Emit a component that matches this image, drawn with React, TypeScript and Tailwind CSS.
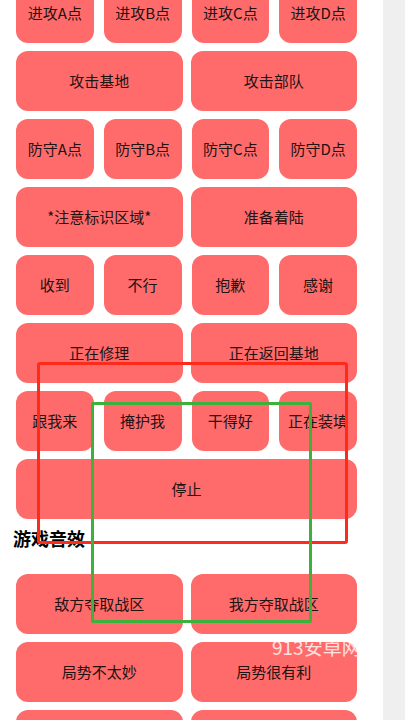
import React from "react";

const font = { fontFamily: '"Noto Sans CJK SC", "Noto Sans", sans-serif' };

function Btn({ label }: { label: string }) {
  return (
    <div className="flex-1 h-[60px] rounded-[12px] bg-[#ff6b6b] flex items-center justify-center text-[15px] text-[#221212]">
      {label}
    </div>
  );
}

function Row4({ items }: { items: string[] }) {
  return (
    <div className="flex gap-[10px]">
      {items.map((t, i) => (
        <Btn key={i} label={t} />
      ))}
    </div>
  );
}

function Row2({ items }: { items: string[] }) {
  return (
    <div className="flex gap-[8px]">
      {items.map((t, i) => (
        <Btn key={i} label={t} />
      ))}
    </div>
  );
}

export default function App() {
  return (
    <div className="relative w-[405px] h-[720px] overflow-hidden flex bg-white" style={font}>
      <div className="w-[383px] bg-white pl-[16px] pr-[26px]">
        <div className="mt-[-17px] flex flex-col gap-[8px]">
          <Row4 items={["进攻A点", "进攻B点", "进攻C点", "进攻D点"]} />
          <Row2 items={["攻击基地", "攻击部队"]} />
          <Row4 items={["防守A点", "防守B点", "防守C点", "防守D点"]} />
          <Row2 items={["*注意标识区域*", "准备着陆"]} />
          <Row4 items={["收到", "不行", "抱歉", "感谢"]} />
          <Row2 items={["正在修理", "正在返回基地"]} />
          <Row4 items={["跟我来", "掩护我", "干得好", "正在装填"]} />
          <div className="flex">
            <Btn label="停止" />
          </div>
        </div>
        <div className="ml-[-3px] h-[55px] pt-[9px] text-[18px] font-bold text-black leading-[20px]">
          游戏音效
        </div>
        <div className="flex flex-col gap-[8px]">
          <Row2 items={["敌方夺取战区", "我方夺取战区"]} />
          <Row2 items={["局势不太妙", "局势很有利"]} />
          <Row2 items={["", ""]} />
        </div>
      </div>
      <div className="flex-1 bg-[#efefef]" />

      <div className="absolute left-[37px] top-[362px] w-[311px] h-[182px] border-[3px] border-[#ff2a1a] rounded-[3px] pointer-events-none" />
      <div className="absolute left-[91px] top-[402px] w-[221px] h-[221px] border-[3px] border-[#3cb13c] rounded-[2px] pointer-events-none" />
      <div className="absolute left-[272px] top-[637px] text-[19px] leading-none text-white/80" style={font}>
        913安卓网
      </div>
    </div>
  );
}
